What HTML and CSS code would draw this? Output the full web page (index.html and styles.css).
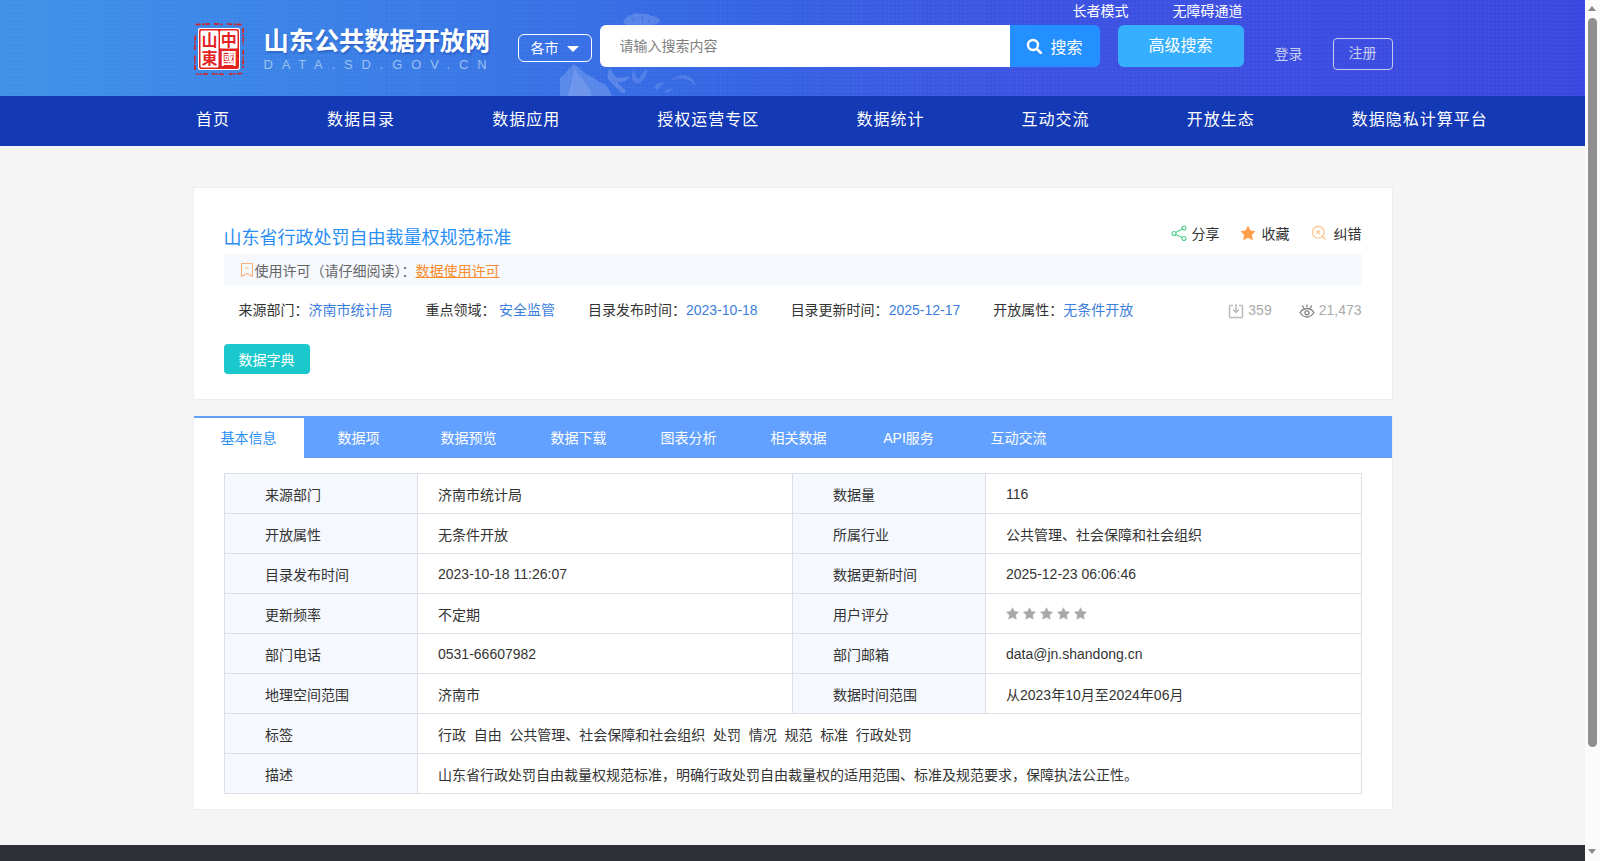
FILE: index.html
```html
<!DOCTYPE html>
<html lang="zh">
<head>
<meta charset="utf-8">
<title>山东公共数据开放网</title>
<link rel="stylesheet" href="styles.css">
</head>
<body>
<div class="page">
  <header class="header">
    <svg class="wash" viewBox="0 0 180 96" aria-hidden="true">
      <path d="M63 22c2-4 6-7 9-7 2-2 6-3 8-1 4-1 8 0 11 2 4 0 8 2 9 5-2 2-5 4-8 4H66z" class="wash-a"/>
      <path d="M72 18l3 3M82 16l1 5M90 19l-2 4" class="wash-line"/>
      <path d="M0 78c5-4 9-10 14-14 5 3 8 8 14 11 6 2 10 7 16 9 4 2 6 7 8 12H0z" class="wash-a"/>
      <path d="M14 66c2 8 8 12 12 18 4 4 4 8 6 12H8c2-10 6-20 6-30z" class="wash-c"/>
      <path d="M50 68c3 4 3 8 8 10 4 0 8-2 12-1-3 4-8 6-13 5 2 3 6 5 8 8 2 2 0 3-3 3-4-4-9-8-13-13-3-4-1-8 1-12z" class="wash-a"/>
      <path d="M74 68c0 6 2 9 5 11 2-4 4-7 8-11 1 5-1 9-5 13-2 3-6 3-8 1-3-4-2-10 0-14z" class="wash-b"/>
      <path d="M94 88c2-5 7-7 11-5-3 1-6 3-7 7zM104 92c3-3 7-4 10-3-3 1-5 2-7 4zM112 80c5-5 12-6 18-3 3 2 5 5 6 9-4-4-8-7-12-7-4-1-8 0-12 1z" class="wash-b"/>
    </svg>
    <div class="header-inner">
      <div class="top-links"><a>长者模式</a><a>无障碍通道</a></div>
      <div class="head-row">
        <div class="brand">
          <svg class="seal" viewBox="0 0 50 52" aria-hidden="true">
            <path d="M1.500 1.500 16 1M20 .8l9 .7M33 1l15 .7M49 5l.5 17M49.500 27l-.5 19M48 50.500l-13 .7M30 51.500l-12-.7M14 51 2 51.500M1 47 .6 32M.6 27l.8-16" fill="none" stroke="#d8201f" stroke-width="1.700" stroke-dasharray="5 1.500 2 1"/>
            <rect x="4" y="5" width="42" height="42" rx="2" fill="#fff"/>
            <rect x="5" y="6" width="40" height="40" rx="2" fill="#e2231f"/>
            <rect x="6.500" y="7.500" width="18" height="37" rx="1.500" fill="#fff"/>
            <rect x="26" y="7.500" width="17.500" height="18" rx="1" fill="#fff"/>
            <text x="15.500" y="8.500" class="seal-col seal-r">山東</text>
            <text x="34.800" y="8.500" class="seal-col seal-r">中<tspan class="seal-w">國</tspan></text>
          </svg>
          <div class="brand-text">
            <div class="brand-name">山东公共数据开放网</div>
            <div class="brand-sub">DATA.SD.GOV.CN</div>
          </div>
        </div>
        <div class="city">各市<i class="caret"></i></div>
        <div class="search">
          <div class="search-input">请输入搜索内容</div>
          <div class="search-btn">
            <svg class="search-icon" viewBox="0 0 16 16" aria-hidden="true"><circle cx="7" cy="7" r="5" fill="none" stroke="#fff" stroke-width="2.400"/><path d="M10.800 10.800 15 15" stroke="#fff" stroke-width="2.600" stroke-linecap="round"/></svg>
            搜索
          </div>
        </div>
        <div class="adv">高级搜索</div>
        <a class="login">登录</a>
        <a class="register">注册</a>
      </div>
    </div>
  </header>
  <nav class="nav">
    <div class="nav-inner">
      <a>首页</a><a>数据目录</a><a>数据应用</a><a>授权运营专区</a><a>数据统计</a><a>互动交流</a><a>开放生态</a><a>数据隐私计算平台</a>
    </div>
  </nav>
  <main class="main">
    <section class="card info">
      <div class="title-row">
        <h1 class="title">山东省行政处罚自由裁量权规范标准</h1>
        <div class="actions">
          <span class="action">
            <svg class="act-icon" viewBox="0 0 16 16" aria-hidden="true"><g fill="none" stroke="#4fd08b" stroke-width="1.100"><circle cx="13" cy="3" r="2"/><circle cx="3" cy="8.500" r="2"/><circle cx="13" cy="13.500" r="2"/><path d="M11.200 4 4.800 7.500M4.800 9.500l6.400 3.100"/></g></svg>分享</span>
          <span class="action">
            <svg class="act-icon" viewBox="0 0 16 16" aria-hidden="true"><path d="M8 1.600l2.100 4.300 4.700.6-3.400 3.300.9 4.700L8 12.300l-4.300 2.200.9-4.700-3.400-3.300 4.700-.6z" fill="#ff9c4a" stroke="#ff9c4a" stroke-linejoin="round"/></svg>收藏</span>
          <span class="action">
            <svg class="act-icon" viewBox="0 0 16 16" aria-hidden="true"><g fill="none" stroke="#ffc188" stroke-width="1.200"><circle cx="7.200" cy="7.200" r="5.800"/><path d="M5.300 5.300l3.800 3.800M9.100 5.300 5.300 9.100M11.500 11.500l3 3"/></g></svg>纠错</span>
        </div>
      </div>
      <div class="license">
        <svg class="book" viewBox="0 0 14 16" aria-hidden="true"><path d="M1.500 1.500h11v13L7 11.500l-5.500 3z" fill="none" stroke="#ffb27a" stroke-width="1.100" stroke-linejoin="round"/><path d="M5.500 6h3" stroke="#ffb27a"/></svg>
        <span>使用许可（请仔细阅读）：</span><a class="license-link">数据使用许可</a>
      </div>
      <div class="meta">
        <span class="meta-item">来源部门：<b>济南市统计局</b></span>
        <span class="meta-item m2">重点领域：<b>安全监管</b></span>
        <span class="meta-item">目录发布时间：<b>2023-10-18</b></span>
        <span class="meta-item">目录更新时间：<b>2025-12-17</b></span>
        <span class="meta-item">开放属性：<b>无条件开放</b></span>
        <span class="count count-dl">
          <svg class="count-icon" viewBox="0 0 16 16" aria-hidden="true"><g fill="none" stroke="#bbb" stroke-width="1.500"><path d="M5 2.500H2.500a1 1 0 0 0-1 1v10a1 1 0 0 0 1 1h11a1 1 0 0 0 1-1v-10a1 1 0 0 0-1-1H11"/><path d="M8 1v8M5 6.500 8 9.500l3-3"/></g></svg>359</span>
        <span class="count">
          <svg class="count-icon" viewBox="0 0 16 16" aria-hidden="true"><g fill="none" stroke="#808080" stroke-width="1.300"><path d="M1 9.500C3 6.500 5.500 5.500 8 5.500s5 1 7 4c-2 3-4.500 4.500-7 4.500S3 12.500 1 9.500z"/><circle cx="8" cy="9.800" r="2"/><path d="M8 1.500v2.500M3.500 2.500l1 2.500M12.500 2.500l-1 2.500"/></g></svg>21,473</span>
      </div>
      <a class="dict">数据字典</a>
    </section>
    <section class="card detail">
      <div class="tabs">
        <a class="tab active">基本信息</a><a class="tab">数据项</a><a class="tab">数据预览</a><a class="tab">数据下载</a><a class="tab">图表分析</a><a class="tab">相关数据</a><a class="tab">API服务</a><a class="tab">互动交流</a>
      </div>
      <div class="table-wrap">
        <table class="table">
          <colgroup><col class="c-l"><col class="c-v"><col class="c-l"><col></colgroup>
          <tr><th>来源部门</th><td>济南市统计局</td><th>数据量</th><td>116</td></tr>
          <tr><th>开放属性</th><td>无条件开放</td><th>所属行业</th><td>公共管理、社会保障和社会组织</td></tr>
          <tr><th>目录发布时间</th><td>2023-10-18 11:26:07</td><th>数据更新时间</th><td>2025-12-23 06:06:46</td></tr>
          <tr><th>更新频率</th><td>不定期</td><th>用户评分</th><td>
            <span class="stars">
              <svg viewBox="0 0 16 16" aria-hidden="true"><use href="#s"/></svg>
              <svg viewBox="0 0 16 16" aria-hidden="true"><use href="#s"/></svg>
              <svg viewBox="0 0 16 16" aria-hidden="true"><use href="#s"/></svg>
              <svg viewBox="0 0 16 16" aria-hidden="true"><use href="#s"/></svg>
              <svg viewBox="0 0 16 16" aria-hidden="true"><use href="#s"/></svg>
            </span></td></tr>
          <tr><th>部门电话</th><td>0531-66607982</td><th>部门邮箱</th><td>data@jn.shandong.cn</td></tr>
          <tr><th>地理空间范围</th><td>济南市</td><th>数据时间范围</th><td>从2023年10月至2024年06月</td></tr>
          <tr><th>标签</th><td colspan="3" class="tags"><span>行政</span><span>自由</span><span>公共管理、社会保障和社会组织</span><span>处罚</span><span>情况</span><span>规范</span><span>标准</span><span>行政处罚</span></td></tr>
          <tr><th>描述</th><td colspan="3">山东省行政处罚自由裁量权规范标准，明确行政处罚自由裁量权的适用范围、标准及规范要求，保障执法公正性。</td></tr>
        </table>
      </div>
    </section>
  </main>
  <footer class="footer"></footer>
</div>
<div class="scrollbar" aria-hidden="true">
  <i class="arrow-up"></i>
  <i class="thumb"></i>
  <i class="arrow-down"></i>
</div>
<svg class="defs" aria-hidden="true"><defs><path id="s" d="M8 .8l2.300 4.700 5.200.7-3.800 3.600 1 5.200L8 12.500l-4.700 2.500 1-5.200L.5 6.200l5.200-.7z" fill="#a8a8a8" stroke="#a8a8a8" stroke-width=".6" stroke-linejoin="round"/></defs></svg>
</body>
</html>
```

FILE: styles.css
```css
* { box-sizing: border-box; }
html, body { margin: 0; height: 861px; overflow: hidden; }
body {
  display: flex;
  font-family: "Liberation Sans", "Noto Sans CJK SC", sans-serif;
  font-size: 14px;
  color: #333;
  background: #f5f5f5;
}
a { color: inherit; text-decoration: none; }
.page { width: 1585px; height: 861px; overflow: hidden; display: flex; flex-direction: column; flex: none; }

.header {
  position: relative;
  flex: none;
  height: 96px;
  background:
    repeating-linear-gradient(90deg, rgba(255,255,255,.025) 0 1px, transparent 1px 4px),
    repeating-linear-gradient(0deg, rgba(255,255,255,.025) 0 1px, transparent 1px 4px),
    linear-gradient(90deg, #3f92e8 0, #3a7fe7 22%, #3566e4 45%, #3c53e2 65%, #3b47e0 100%);
  overflow: hidden;
}
.wash { position: absolute; left: 560px; top: 0; width: 180px; height: 96px; }
.wash-a { fill: rgba(255,255,255,.17); }
.wash-b { fill: rgba(255,255,255,.13); }
.wash-c { fill: rgba(255,255,255,.12); }
.wash-line { fill: none; stroke: rgba(40,90,220,.35); stroke-width: 1.500; }
.header-inner { position: relative; width: 1200px; margin: 0 auto; }
.top-links { height: 25px; display: flex; padding-left: 880px; gap: 44px; color: #fff; line-height: 22px; }
.head-row { display: flex; align-items: flex-start; }
.brand { display: flex; width: 325px; padding-left: 1.500px; margin-top: -2px; height: 52px; }
.seal { width: 50px; height: 52px; flex: none; }
.seal-col { font-family: "Noto Sans CJK TC", sans-serif; font-size: 16px; font-weight: 700; writing-mode: vertical-rl; letter-spacing: 2px; }
.seal-r { fill: #e2231f; }
.seal-w { fill: #fff; }
.brand-text { margin-left: 19.500px; }
.brand-name { font-size: 25.200px; font-weight: 700; color: #fff; line-height: 30px; margin-top: 3px; white-space: nowrap; text-shadow: 1px 2px 2px rgba(20,50,140,.35); }
.brand-sub { font-size: 13px; line-height: 14px; margin-top: 2px; letter-spacing: 8.850px; color: #9cc0f0; white-space: nowrap; }
.city {
  width: 74px; height: 28px; margin-top: 9px;
  border: 1px solid #fff; border-radius: 6px;
  color: #fff; line-height: 27px; padding: 1px 0 0 12px;
  display: flex; align-items: center; gap: 8px;
}
.caret { width: 0; height: 0; border-style: solid; border-width: 6px 6px 0; border-color: #fff transparent transparent; }
.search { display: flex; height: 42px; width: 500px; margin-left: 8px; border-radius: 6px; overflow: hidden; }
.search-input { width: 410px; background: #fff; color: #808080; padding-left: 20px; line-height: 42px; }
.search-btn { width: 90px; flex: none; background: #2490ff; color: #fff; font-size: 16px; display: flex; align-items: center; padding-left: 16px; gap: 9px; }
.search-icon { width: 16px; height: 16px; }
.adv { width: 126px; height: 42px; margin-left: 18px; background: #36afff; border-radius: 6px; color: #fff; font-size: 16px; text-align: center; line-height: 41px; }
.login { margin-left: 31px; margin-top: 18px; color: #c8d0f0; line-height: 22px; }
.register { margin-left: 30px; margin-top: 13px; width: 60px; height: 32px; border: 1px solid #c3cbec; border-radius: 4px; color: #c8d0f0; text-align: center; line-height: 29px; }

.nav { flex: none; height: 50px; background: #1339b4; }
.nav-inner { width: 1200px; margin: 0 auto; padding-left: 3.500px; display: flex; gap: 97.100px; color: #fff; font-size: 16px; letter-spacing: 1px; line-height: 48px; white-space: nowrap; }

.main { flex: 1; width: 1200px; margin: 0 0 0 192.500px; padding-top: 41px; }
.card { background: #fff; border: 1px solid #eee; }
.info { height: 213px; padding: 30px 30px 0 30px; }
.title-row { display: flex; justify-content: space-between; height: 36px; }
.title { margin: 0; font-size: 18px; font-weight: 400; color: #2a8ff5; line-height: 40px; }
.actions { display: flex; gap: 20px; margin-top: -3px; }
.action { display: flex; align-items: center; height: 36px; gap: 5px; }
.act-icon { width: 16px; height: 16px; }
.action:nth-child(2) { gap: 6px; }
.action:nth-child(3) { gap: 7px; margin-left: 1px; }
.license { height: 32px; background: #f5f8fd; display: flex; align-items: center; padding-left: 16px; color: #666; }
.book { width: 14px; height: 16px; margin-right: 1px; }
.license-link { color: #fb8c2c; text-decoration: underline; }
.meta { display: flex; align-items: center; height: 48px; padding: 0 0 2px 15px; white-space: nowrap; }
.meta-item { margin-right: 33px; }
.meta-item b { font-weight: 400; color: #3b7edb; }
.m2 b { margin-left: 3.500px; }
.meta-item:nth-child(5) { margin-right: auto; }
.count { display: flex; align-items: center; gap: 4px; color: #aaa; padding-top: 2px; }
.count-dl { margin-right: 27px; }
.count-icon { width: 16px; height: 16px; margin-top: 2px; }
.dict { display: block; width: 86px; height: 30px; margin-top: 10px; background: #1bc8cc; border-radius: 4px; color: #fff; text-align: center; line-height: 32px; }

.detail { margin-top: 16px; height: 394px; }
.tabs { display: flex; height: 42px; margin: -1px 0 0; background: #62a1ff; }
.tab { width: 110px; text-align: center; color: #fff; line-height: 44px; }
.tab.active { background: #fff; color: #2a8ff5; margin-top: 2px; line-height: 40px; }
.table-wrap { padding: 15px 0 0 30.500px; }
.table { width: 1138px; table-layout: fixed; border-collapse: collapse; color: #333; }
.c-l { width: 193px; }
.c-v { width: 375px; }
.table th, .table td { height: 40px; padding: 0 20px; border: 1px solid #dcdfe6; font-weight: 400; text-align: left; }
.table th { padding-left: 40px; background: #f5f8fd; }
.tags span { margin-right: 7.700px; }
.stars { display: flex; gap: 4px; }
.stars svg { width: 13px; height: 13px; }

.footer { flex: none; height: 16px; background: #2e2f34; }

.scrollbar { width: 15px; flex: none; height: 861px; background: #fbfbfb; position: relative; }
.scrollbar i { display: block; position: absolute; }
.arrow-up { left: 3px; top: 6px; border-style: solid; border-width: 0 4.500px 5px; border-color: transparent transparent #8a8a8a; }
.arrow-down { left: 3px; bottom: 7px; border-style: solid; border-width: 5px 4.500px 0; border-color: #8a8a8a transparent transparent; }
.thumb { left: 3px; top: 18px; width: 9px; height: 729px; background: #8f8f8f; border-radius: 5px; }
.defs { position: absolute; width: 0; height: 0; }
```
